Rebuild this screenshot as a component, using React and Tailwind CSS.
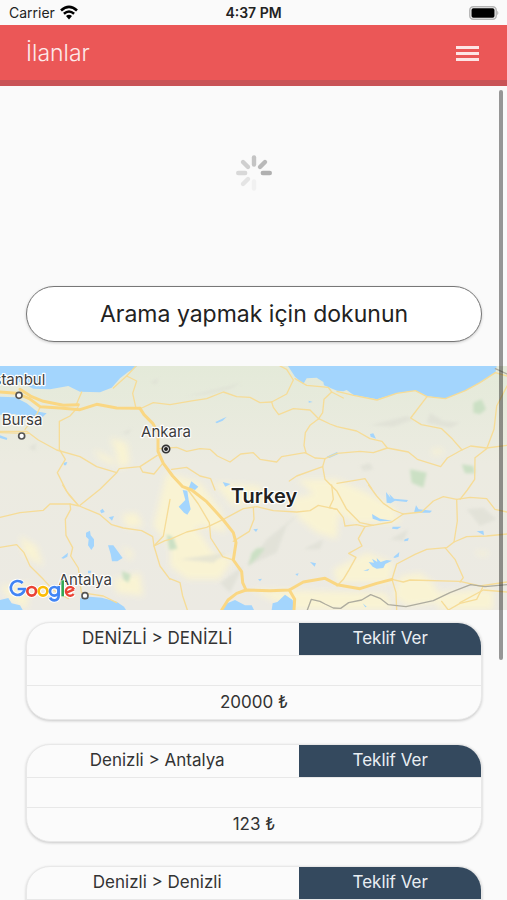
import React from "react";

const listings = [
  { route: "DENİZLİ > DENİZLİ", price: "20000 ₺" },
  { route: "Denizli > Antalya", price: "123 ₺" },
  { route: "Denizli > Denizli", price: "250 ₺" },
];

const cities = [
  { name: "Istanbul", x: 136, y: 56, anchor: "end", dotX: 57, dotY: 88 },
  { name: "Bursa", x: 66, y: 177, anchor: "middle", dotX: 65, dotY: 210 },
  { name: "Antalya", x: 256, y: 657, anchor: "middle", dotX: 255, dotY: 689 },
];

const highways = [
  "M0 78 L50 82 L88 98 L120 122 L180 126 L240 131 L290 115 L350 126 L420 127",
  "M60 70 L95 92 L130 106 L190 118 L235 116",
  "M420 127 L432 146 L458 172 L474 200 L474 256 L490 292 L518 330 L548 362 L575 372 L620 407 L670 462 L700 500 L708 530 L700 582 L725 617 L728 650 L738 672",
  "M665 732 L684 702 L710 682 L738 672 L810 674 L868 672 L910 648 L975 637 L1011 656 L1080 668 L1130 652 L1176 640",
  "M868 672 L884 700 L882 732",
];

const roads = [
  "M0 200 L85 202",
  "M0 196 L80 196 L115 222 L170 252 L240 272 L290 302 L350 320 L300 370 L240 418",
  "M120 124 L112 142 L75 190",
  "M235 122 L210 150 L178 166 L178 250 L196 280 L172 320 L200 376 L235 418",
  "M350 320 L358 308 L420 302 L472 268",
  "M420 302 L428 318 L462 324 L488 292",
  "M228 118 L245 78",
  "M340 66 L380 30 L408 0",
  "M380 30 L410 45 L398 82 L408 127",
  "M425 126 L460 110 L510 116 L580 104 L620 98 L670 78 L710 92 L750 94 L780 110 L815 108 L860 84 L880 42 L860 10 L840 0",
  "M815 108 L820 124 L836 146 L880 128 L930 132 L956 158 L990 174 L1011 182 L1070 195 L1110 218 L1146 226 L1162 246 L1225 258 L1252 280 L1322 302 L1342 276 L1385 252 L1412 240 L1460 246 L1521 238",
  "M478 248 L530 244 L560 256 L600 248 L630 250 L652 270 L690 288 L722 264 L760 260 L780 280 L830 288 L845 272 L915 260 L945 276 L975 278",
  "M956 158 L930 178 L916 200 L912 238 L918 260",
  "M956 158 L968 140 L972 100 L995 78 L985 64 L920 58 L885 38",
  "M995 78 L1030 96",
  "M975 278 L1011 262 L1080 256 L1120 260 L1162 246",
  "M975 278 L968 302 L890 330 L868 345",
  "M968 302 L975 340 L995 360 L1011 376 L1040 430 L1080 470 L1120 478",
  "M515 310 L560 304 L600 330 L632 338 L645 372",
  "M1281 92 L1232 156 L1264 176 L1325 188 L1358 220 L1386 252",
  "M1011 76 L1061 88 L1131 102 L1190 82 L1246 74 L1281 92 L1336 98 L1396 74 L1440 50 L1486 20",
  "M1521 60 L1490 120 L1482 190 L1460 248 L1425 275 L1424 340 L1402 372 L1380 400",
  "M1486 20 L1521 30",
  "M0 454 L60 440 L130 433 L150 414 L210 414 L238 420 L300 446 L335 476 L370 486 L425 494 L458 512 L462 540 L495 524 L510 520 L560 498 L620 484 L670 460 L730 428 L770 422 L820 434 L890 438 L930 434 L955 418 L1011 430",
  "M188 357 L208 388 L235 418",
  "M210 414 L212 430 L196 460 L198 508 L218 545 L212 570 L235 606 L244 680 L310 690 L350 710",
  "M0 544 L50 536 L72 560 L90 600 L130 640 L160 672 L205 698",
  "M510 400 L490 510 L462 540 L480 600 L510 640",
  "M510 638 L540 650 L548 690 L562 732",
  "M560 366 L595 414 L628 470 L632 516 L668 572 L700 582",
  "M760 425 L762 460 L748 496 L700 526",
  "M1011 430 L1030 455 L1035 480 L1070 476 L1095 482 L1175 468 L1210 444 L1265 438 L1300 405 L1330 392 L1370 400 L1410 394 L1460 398 L1485 430 L1521 438",
  "M1106 357 L1130 390 L1150 412 L1180 432 L1210 444",
  "M1095 482 L1075 518 L1086 540 L1046 562 L1068 574 L1048 610 L1030 640 L1011 660",
  "M1370 400 L1372 465 L1362 528 L1340 545 L1280 550 L1245 565 L1190 594 L1176 640 L1188 680 L1190 732",
  "M1362 528 L1400 512 L1460 510 L1521 504",
  "M1335 545 L1365 580 L1390 635 L1380 648",
  "M1176 640 L1210 648 L1230 642 L1380 646 L1440 660 L1521 648",
  "M1450 660 L1430 700 L1380 712 L1345 732 L1325 706",
  "M1521 678 L1450 672 L1380 710",
  "M1011 352 L1060 344 L1095 338 L1115 368",
  "M995 357 L1000 400 L988 425 L1011 430",
];

const waters = [
  "M0 0 H412 L400 10 L385 17 L360 37 L335 65 L300 79 L240 77 L205 60 L150 70 L100 68 L60 48 L0 38 Z",
  "M0 92 L45 94 L80 112 L110 136 L140 142 L128 153 L95 150 L75 158 L45 144 L0 146 Z",
  "M0 208 L22 216 L20 222 L0 216 Z",
  "M864 0 L885 32 L910 54 L920 37 L950 35 L970 48 L972 58 L1011 74 L1030 76 L1040 72 L1061 87 L1131 100 L1196 80 L1246 74 L1281 90 L1336 98 L1396 74 L1451 44 L1486 20 L1490 0 Z",
  "M0 702 L25 696 L35 712 L60 718 L68 732 H0 Z",
  "M240 732 L240 697 L270 692 L305 695 L350 707 L372 722 L378 732 Z",
  "M665 732 L682 712 L705 702 L735 718 L755 718 L762 732 Z",
  "M815 732 L818 712 L832 708 L855 686 L878 702 L882 732 Z",
  "M258 500 L270 494 L272 508 L282 520 L282 540 L274 552 L264 538 L266 520 L258 512 Z",
  "M324 538 L340 538 L368 576 L352 586 L336 586 L332 564 Z",
  "M184 576 L204 560 L202 572 L190 578 Z",
  "M300 434 L308 428 L314 438 L304 442 Z",
  "M326 454 L342 450 L336 464 Z",
  "M264 614 L274 614 L272 622 L264 622 Z",
  "M190 290 L202 288 L198 298 L192 298 Z",
  "M548 372 L556 402 L536 422 L552 440 L562 446 L572 430 L566 402 L562 374 Z",
  "M566 366 L574 346 L595 362 L585 372 L566 366 Z",
  "M668 348 L692 354 L676 362 Z",
  "M646 168 L680 152 L668 164 L650 172 Z",
  "M926 104 L938 108 L926 110 Z",
  "M980 272 L1011 258 L1015 264 L988 276 Z",
  "M760 490 L774 488 L768 498 Z",
  "M930 588 L948 592 L944 602 Z",
  "M774 640 L786 638 L780 646 Z",
  "M886 624 L896 622 L892 630 Z",
  "M1110 204 L1120 202 L1128 218 L1112 212 Z",
  "M1158 378 L1172 396 L1168 384 L1182 398 L1224 402 L1220 408 L1185 404 L1172 412 L1160 410 Z",
  "M1248 418 L1256 430 L1296 434 L1290 440 L1242 440 Z",
  "M1116 444 L1140 458 L1176 464 L1140 466 L1118 458 Z",
  "M1178 482 L1204 482 L1192 490 L1176 488 Z",
  "M1214 520 L1226 516 L1224 524 L1212 526 Z",
  "M1180 574 L1198 558 L1196 572 L1184 576 Z",
  "M1106 588 L1122 590 L1116 578 L1132 588 L1130 576 L1142 588 L1160 582 L1176 584 L1156 594 L1150 606 L1130 608 L1118 602 Z",
  "M1090 614 L1108 608 L1104 614 Z",
  "M1430 496 L1450 494 L1452 508 Z",
  "M1088 712 L1100 722 L1096 724 Z",
];

const farmland = [
  "M280 250 L340 280 L345 300 L300 278 Z",
  "M330 215 L380 230 L390 290 L360 310 L345 250 Z",
  "M365 445 L410 440 L430 480 L380 485 Z",
  "M60 510 L110 540 L130 600 L90 580 L70 560 Z",
  "M365 540 L400 560 L390 585 Z",
  "M340 640 L420 620 L430 690 L350 680 Z",
  "M500 320 L600 350 L660 430 L680 500 L600 480 L510 540 L460 480 Z",
  "M510 460 L600 500 L640 560 L700 580 L660 640 L560 640 L510 600 Z",
  "M640 350 L780 360 L800 410 L700 420 Z",
  "M860 400 L960 380 L1020 410 L1010 520 L950 500 L900 460 Z",
  "M890 340 L1010 340 L1100 380 L1180 420 L1200 470 L1060 470 L960 400 Z",
  "M1000 610 L1100 560 L1180 590 L1170 650 L1010 650 Z",
  "M1200 630 L1260 620 L1300 650 L1330 710 L1220 720 L1180 690 Z",
  "M750 670 L1160 680 L1180 732 L880 732 Z",
  "M1300 680 L1480 670 L1480 732 L1320 732 Z",
  "M1295 252 L1325 248 L1330 260 L1300 266 Z",
  "M0 660 L90 650 L80 732 L30 700 Z",
  "M1420 555 L1470 560 L1450 570 Z",
];

const woods = [
  "M1420 110 L1445 100 L1458 130 L1440 145 L1420 140 Z",
  "M1385 295 L1420 300 L1425 322 L1395 322 Z",
  "M1230 310 L1280 320 L1270 365 L1235 350 Z",
  "M755 562 L770 547 L795 547 L775 572 L745 600 Z",
  "M500 505 L520 515 L532 548 L508 552 Z",
  "M365 615 L392 625 L385 650 L370 640 Z",
];

const hills = [
  "M560 90 L650 70 L725 50 L690 68 L620 84 Z",
  "M860 480 L900 440 L800 520 L740 600 L830 560 Z",
  "M660 650 L730 600 L690 680 Z",
  "M910 550 L970 520 L960 550 Z",
  "M1170 520 L1225 490 L1210 525 Z",
  "M1110 178 L1220 150 L1240 160 L1180 182 Z",
  "M1290 140 L1330 165 L1380 170 L1350 185 L1280 170 Z",
  "M1400 430 L1450 425 L1490 460 L1440 480 Z",
  "M1080 300 L1110 290 L1120 310 L1090 315 Z",
  "M85 245 L110 230 L105 255 Z",
  "M450 50 L475 35 L470 55 Z",
  "M365 200 L395 188 L385 205 Z",
  "M540 580 L680 560 L640 590 Z",
];

const StatusBar = () => (
  <div className="grid h-[25px] shrink-0 grid-cols-3 items-center px-2 text-sm leading-none">
    <div className="flex items-center gap-1 pl-px">
      <span>Carrier</span>
      <svg viewBox="0 0 20 15" className="h-[15px] w-5" fill="none" aria-hidden="true">
        <path d="M2 5.4 Q10 -1.6 18 5.4" stroke="#000" strokeWidth="2.7" />
        <path d="M4.9 8.7 Q10 4.2 15.1 8.7" stroke="#000" strokeWidth="2.5" />
        <path d="M7 11.1 Q10 8.3 13 11.1 L10 14.4 Z" fill="#000" />
      </svg>
    </div>
    <span className="text-center font-semibold">4:37 PM</span>
    <svg viewBox="0 0 30 14" className="h-[14px] w-[30px] justify-self-end" aria-hidden="true">
      <rect x="0.8" y="0.8" width="26.4" height="12.4" rx="3.5" fill="#fafafa" stroke="#b5b5b5" strokeWidth="1.5" />
      <rect x="2.5" y="2.3" width="23" height="9.4" rx="1.8" fill="#000" />
      <path d="M28.3 4.8 Q30.4 7 28.3 9.2 Z" fill="#aaa" />
    </svg>
  </div>
);

const Header = () => (
  <header className="flex h-[61px] shrink-0 items-center justify-between border-b-[6px] border-[#c95356] bg-[#eb5757] pt-px pr-7 pl-[26px] text-[#fdeaea]">
    <h1 className="text-[23px] font-light">İlanlar</h1>
    <button type="button" aria-label="Menü" className="flex w-[23px] flex-col gap-[3px]">
      <span className="h-[3px] w-full bg-[#fde5e5]" />
      <span className="h-[3px] w-full bg-[#fde5e5]" />
      <span className="h-[3px] w-full bg-[#fde5e5]" />
    </button>
  </header>
);

const Spinner = () => (
  <svg viewBox="-20 -20 40 40" className="size-10" strokeWidth="4.4" strokeLinecap="round" role="img" aria-label="Yükleniyor">
    <path d="M0 -8.5 V-15.5" stroke="#c4c4c4" />
    <path d="M6 -6 L11 -11" stroke="#b9b9b9" />
    <path d="M8.8 0 H15.8" stroke="#b0b0b0" />
    <path d="M0 8.5 V15.5" stroke="#f1f1f1" />
    <path d="M-6 6 L-11 11" stroke="#e4e4e4" />
    <path d="M-8.8 0 H-15.8" stroke="#d8d8d8" />
    <path d="M-6 -6 L-11 -11" stroke="#cfcfcf" />
  </svg>
);

const TurkeyMap = () => (
  <svg viewBox="0 0 1521 732" className="block w-full" role="img" aria-label="Turkey">
    <defs>
      <linearGradient id="land" x1="0" y1="0" x2="0" y2="1">
        <stop offset="0" stopColor="#e4ead9" />
        <stop offset="0.4" stopColor="#ecebe1" />
        <stop offset="1" stopColor="#eceae3" />
      </linearGradient>
      <filter id="soft">
        <feGaussianBlur stdDeviation="9" />
      </filter>
      <filter id="softer">
        <feGaussianBlur stdDeviation="4" />
      </filter>
    </defs>
    <rect width="1521" height="732" fill="url(#land)" />
    <g fill="#fbf4d2" opacity="0.9" filter="url(#soft)">
      {farmland.map((d) => <path key={d} d={d} />)}
    </g>
    <g fill="#dcddd3" opacity="0.6" filter="url(#softer)">
      {hills.map((d) => <path key={d} d={d} />)}
    </g>
    <g fill="#cbe0c4" filter="url(#softer)">
      {woods.map((d) => <path key={d} d={d} />)}
    </g>
    <g fill="#a3d5fd">
      {waters.map((d) => <path key={d} d={d} />)}
    </g>
    <g fill="none" strokeLinejoin="round" strokeLinecap="round">
      <g stroke="#f6dc97" strokeWidth="4">
        {roads.map((d) => <path key={d} d={d} />)}
      </g>
      <g stroke="#fad783" strokeWidth="9">
        {highways.map((d) => <path key={d} d={d} />)}
      </g>
      <path
        d="M922 732 L934 700 L960 706 L975 714 L1000 726 L1022 727 L1046 710 L1085 702 L1112 686 L1142 698 L1165 716 L1218 722 L1300 704 L1350 680 L1412 656 L1455 662 L1521 656"
        stroke="#aeac9f"
        strokeWidth="4"
      />
      <path d="M1486 8 L1521 24" stroke="#aeac9f" strokeWidth="4" />
    </g>
    <g fontSize="45" fill="#3c3c3c" stroke="#fff" strokeWidth="7" strokeLinejoin="round" paintOrder="stroke">
      {cities.map((city) => (
        <text key={city.name} x={city.x} y={city.y} textAnchor={city.anchor}>
          {city.name}
        </text>
      ))}
      <text x="498" y="212" textAnchor="middle">Ankara</text>
      <text x="792" y="410" textAnchor="middle" fontSize="60" fontWeight="600" fill="#222">
        Turkey
      </text>
    </g>
    {cities.map((city) => (
      <circle key={city.name} cx={city.dotX} cy={city.dotY} r="9" fill="#fff" stroke="#555" strokeWidth="5" />
    ))}
    <circle cx="498" cy="249" r="11" fill="#fff" stroke="#333" strokeWidth="5" />
    <circle cx="498" cy="249" r="6" fill="#222" />
    {/* Google wordmark */}
    <g fill="none" strokeWidth="8">
      <g stroke="#fff" strokeWidth="14">
        <path d="M68 651 A21 21 0 1 0 74 669 H53" />
        <circle cx="95" cy="676" r="13" />
        <circle cx="129" cy="676" r="13" />
        <circle cx="163" cy="676" r="13" />
        <path d="M176 660 V688 Q176 703 163 703 Q154 703 150 695 M188 643 V691 M200 680 L222 670 M221 684 A13 13 0 1 1 222 670" />
      </g>
      <path d="M68 651 A21 21 0 1 0 74 669 H53" stroke="#4285f4" />
      <circle cx="95" cy="676" r="13" stroke="#ea4335" />
      <circle cx="129" cy="676" r="13" stroke="#fbbc05" />
      <circle cx="163" cy="676" r="13" stroke="#4285f4" />
      <path d="M176 660 V688 Q176 703 163 703 Q154 703 150 695" stroke="#4285f4" />
      <path d="M188 643 V691" stroke="#34a853" />
      <path d="M200 680 L222 670 M221 684 A13 13 0 1 1 222 670" stroke="#ea4335" strokeWidth="7" />
    </g>
  </svg>
);

const ListingCard = ({ route, price }) => (
  <article className="overflow-hidden rounded-[24px] border border-[#e8e8e8] bg-[#fbfbfb] text-center text-[17px] text-[#333] shadow-[0_1px_3px_rgba(0,0,0,0.2)]">
    <div className="flex h-8 items-stretch">
      <h2 className="flex w-3/5 items-center justify-center pr-3">{route}</h2>
      <button type="button" className="w-2/5 bg-[#34495e] text-[#e9eef3]">
        Teklif Ver
      </button>
    </div>
    <div className="h-[31px] border-y border-[#e8e8e8]" />
    <p className="flex h-[33px] items-center justify-center">{price}</p>
  </article>
);

export default function App() {
  return (
    <div className="flex h-screen flex-col bg-[#fafafa] font-['Inter','Liberation_Sans',sans-serif] text-[#222]">
      <StatusBar />
      <Header />
      <div className="relative min-h-0 flex-1">
        <main className="h-full overflow-y-auto [scrollbar-width:none]">
          <div className="flex h-[200px] items-center justify-center pb-[26px]">
            <Spinner />
          </div>
          <div className="pr-[25px] pl-[26px]">
            <button
              type="button"
              className="h-14 w-full rounded-full border border-[#777] bg-white text-[23px] shadow-[0_1px_3px_rgba(0,0,0,0.2)]">
              Arama yapmak için dokunun
            </button>
          </div>
          <div className="mt-6">
            <TurkeyMap />
          </div>
          <div className="flex flex-col gap-6 py-3 pr-[25px] pl-[26px]">
            {listings.map((listing) => (
              <ListingCard key={listing.route} {...listing} />
            ))}
          </div>
        </main>
        <div className="absolute top-1 right-1 h-[70%] w-1 rounded-full bg-black/40" />
      </div>
    </div>
  );
}
